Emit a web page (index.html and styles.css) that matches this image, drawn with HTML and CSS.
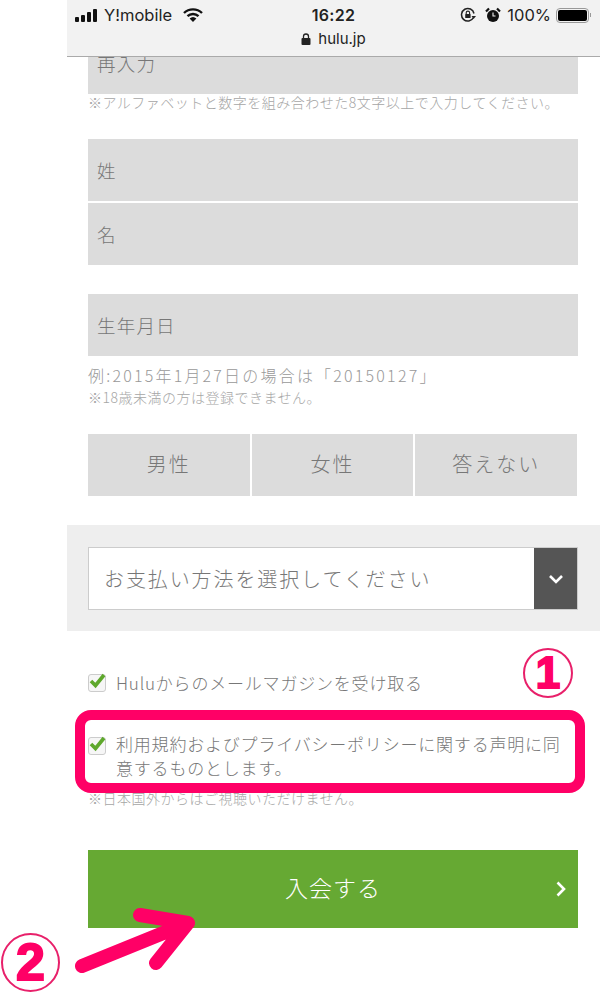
FILE: index.html
```html
<!DOCTYPE html>
<html lang="ja">
<head>
    <meta charset="UTF-8">
    <meta name="viewport" content="width=device-width, initial-scale=1.0">
    <link rel="stylesheet" href="styles.css">
    <title>Hulu</title>
</head>
<body>
    <div class="screen">
        <div class="browser-bar">
            <div class="status-row">
                <div class="status-left">
                    <svg class="signal" width="24" height="13" viewBox="0 0 24 13">
                        <rect x="0" y="8" width="4" height="5" rx="1"/>
                        <rect x="6" y="6" width="4" height="7" rx="1"/>
                        <rect x="12" y="3" width="4" height="10" rx="1"/>
                        <rect x="18" y="0" width="4" height="13" rx="1"/>
                    </svg>
                    <span>Y!mobile</span>
                    <svg class="wifi" width="20" height="14" viewBox="0 0 20 14">
                        <path d="M1 5 A13 13 0 0 1 19 5" fill="none" stroke="#111" stroke-width="2.4"/>
                        <path d="M4.5 8.2 A8 8 0 0 1 15.5 8.2" fill="none" stroke="#111" stroke-width="2.4"/>
                        <path d="M10 14 L6.6 10.6 A5 5 0 0 1 13.4 10.6 Z" fill="#111"/>
                    </svg>
                </div>
                <div class="status-time">16:22</div>
                <div class="status-right">
                    <svg class="rotate-lock" width="16" height="16" viewBox="0 0 16 16">
                        <path d="M13.5 10.5 A6.3 6.3 0 1 1 14 6.5" fill="none" stroke="#222" stroke-width="1.5"/>
                        <path d="M16 9 L11.5 9 L13.7 12 Z" fill="#222"/>
                        <rect x="5.2" y="7" width="5.4" height="4" rx="0.6" fill="#222"/>
                        <path d="M6.2 7 V5.8 A1.7 1.7 0 0 1 9.6 5.8 V7" fill="none" stroke="#222" stroke-width="1.1"/>
                    </svg>
                    <svg class="alarm" width="16" height="16" viewBox="0 0 16 16">
                        <circle cx="8" cy="9" r="6" fill="#111"/>
                        <path d="M1 4.5 L4 1.5 M15 4.5 L12 1.5" stroke="#111" stroke-width="2.2"/>
                        <path d="M8 5.5 V9 H10.5" fill="none" stroke="#f2f2f2" stroke-width="1.1"/>
                    </svg>
                    <span>100%</span>
                    <div class="battery"><div class="battery-fill"></div></div>
                    <div class="battery-tip"></div>
                </div>
            </div>
            <div class="url-row">
                <svg width="10" height="12" viewBox="0 0 10 12">
                    <rect x="0.5" y="5" width="9" height="7" rx="1" fill="#222"/>
                    <path d="M2.5 5 V3.5 A2.5 2.5 0 0 1 7.5 3.5 V5" fill="none" stroke="#222" stroke-width="1.3"/>
                </svg>
                <span>hulu.jp</span>
            </div>
        </div>

        <div class="form-top">
            <div class="field">再入力</div>
            <p class="note note-pass">※アルファベットと数字を組み合わせた8文字以上で入力してください。</p>

            <div class="field-group">
                <div class="field">姓</div>
                <div class="field">名</div>
            </div>

            <div class="field field-birth">生年月日</div>
            <p class="birth-example">例:2015年1月27日の場合は「20150127」</p>
            <p class="note note-age">※18歳未満の方は登録できません。</p>

            <div class="gender">
                <div class="gender-item">男性</div>
                <div class="gender-item">女性</div>
                <div class="gender-item">答えない</div>
            </div>
        </div>

        <div class="payment">
            <div class="select">
                <div class="select-label">お支払い方法を選択してください</div>
                <div class="select-arrow">
                    <svg width="16" height="10" viewBox="0 0 16 10">
                        <path d="M2 2 L8 8 L14 2" fill="none" stroke="#fff" stroke-width="2.6"/>
                    </svg>
                </div>
            </div>
        </div>

        <div class="form-bottom">
            <div class="check-row check-mail">
                <div class="checkbox">
                    <svg width="20" height="18" viewBox="0 0 20 18">
                        <path d="M3 9 L7.5 13.5 L16 3" fill="none" stroke="#5ea82c" stroke-width="3.6"/>
                    </svg>
                </div>
                <span>Huluからのメールマガジンを受け取る</span>
            </div>
            <div class="check-row check-terms">
                <div class="checkbox">
                    <svg width="20" height="18" viewBox="0 0 20 18">
                        <path d="M3 9 L7.5 13.5 L16 3" fill="none" stroke="#5ea82c" stroke-width="3.6"/>
                    </svg>
                </div>
                <span>利用規約およびプライバシーポリシーに関する声明に同<br>意するものとします。</span>
            </div>
            <p class="note note-abroad">※日本国外からはご視聴いただけません。</p>
            <div class="submit">
                入会する
                <svg class="submit-arrow" width="12" height="18" viewBox="0 0 12 18">
                    <path d="M2.5 2.5 L9 9 L2.5 15.5" fill="none" stroke="#fff" stroke-width="2.6"/>
                </svg>
            </div>
        </div>

        <!-- annotations drawn over the screenshot -->
        <div class="mark-box"></div>
        <div class="mark-num mark-one">1</div>
        <div class="mark-num mark-two">2</div>
        <svg class="mark-arrow" width="130" height="70" viewBox="0 0 130 70">
            <path d="M10 59 L116 16 M68 8 L116 16 L84 56" fill="none" stroke="#ff0066" stroke-width="14" stroke-linecap="round" stroke-linejoin="round"/>
        </svg>
    </div>
</body>
</html>
```

FILE: styles.css
```css
html, body {
    margin: 0;
    padding: 0;
    background-color: #ffffff;
}

body {
    font-family: "Noto Sans CJK JP", sans-serif;
    font-weight: 300;
    color: #777777;
}

p {
    margin: 0;
}

.screen {
    position: relative;
    width: 600px;
    height: 992px;
    overflow: hidden;
    padding-left: 67px;
    box-sizing: border-box;
}

.browser-bar {
    position: absolute;
    top: 0;
    left: 67px;
    right: 0;
    height: 56px;
    background-color: #f2f2f2;
    border-bottom: 1px solid #aaaaaa;
    font-family: Inter, sans-serif;
    font-weight: 400;
    color: #222222;
    z-index: 2;
}

.status-row {
    position: relative;
    display: flex;
    align-items: center;
    justify-content: space-between;
    height: 30px;
    padding: 0 9px 0 8px;
    font-size: 16.5px;
}

.status-left, .status-right {
    display: flex;
    align-items: center;
}

.status-left span {
    margin-left: 5px;
}

.signal {
    fill: #111111;
}

.wifi {
    margin-left: 11px;
}

.status-time {
    position: absolute;
    left: 0;
    right: 0;
    text-align: center;
    font-size: 16px;
    font-weight: 600;
    letter-spacing: 0.3px;
}

.alarm {
    margin-left: 9px;
}

.status-right span {
    margin-left: 6px;
}

.battery {
    width: 29px;
    height: 11px;
    margin-left: 5px;
    padding: 1px;
    border: 1px solid #999999;
    border-radius: 4px;
}

.battery-fill {
    height: 100%;
    background-color: #000000;
    border-radius: 2px;
}

.battery-tip {
    width: 1px;
    height: 4px;
    margin-left: 1px;
    background-color: #999999;
}

.url-row {
    display: flex;
    align-items: center;
    justify-content: center;
    gap: 7px;
    margin-top: -1px;
    font-size: 15px;
}

.form-top {
    padding: 32px 22px 29px 21px;
}

.field {
    height: 62px;
    padding-left: 9px;
    background-color: #dcdcdc;
    font-size: 18.5px;
    line-height: 62px;
    letter-spacing: 1.2px;
    color: #777777;
}

.note {
    font-size: 14px;
    line-height: 18px;
    letter-spacing: 0.5px;
    color: #a6a6a6;
}

.note-pass {
    line-height: 16px;
}

.field-group {
    display: flex;
    flex-direction: column;
    gap: 2px;
    margin-top: 29px;
}

.field-birth {
    margin-top: 29px;
}

.birth-example {
    margin-top: 9px;
    font-size: 16px;
    line-height: 20px;
    letter-spacing: 2.2px;
    color: #999999;
}

.note-age {
    margin-top: 3px;
}

.gender {
    display: flex;
    gap: 2px;
    margin-top: 28px;
    width: 489px;
}

.gender-item {
    flex: 1;
    height: 62px;
    background-color: #dcdcdc;
    font-size: 20px;
    line-height: 60px;
    letter-spacing: 2px;
    text-align: center;
}

.payment {
    padding: 22px 22px 21px 21px;
    background-color: #eeeeee;
}

.select {
    display: flex;
    height: 63px;
    box-sizing: border-box;
    background-color: #ffffff;
    border: 1px solid #cccccc;
}

.select-label {
    flex: 1;
    padding-left: 15px;
    font-size: 20px;
    line-height: 61px;
    letter-spacing: 1.9px;
}

.select-arrow {
    display: flex;
    align-items: center;
    justify-content: center;
    width: 43px;
    background-color: #555555;
}

.form-bottom {
    padding: 0 22px 0 21px;
}

.check-row {
    display: flex;
    font-size: 17px;
    line-height: 24px;
    letter-spacing: 0.8px;
    color: #777777;
}

.check-mail {
    margin-top: 40px;
    align-items: center;
}

.check-terms {
    margin-top: 37px;
    height: 49px;
}

.checkbox {
    position: relative;
    flex: none;
    width: 16px;
    height: 16px;
    margin-right: 10px;
    border: 1px solid #cccccc;
    border-radius: 3px;
    background-color: #f6f6f6;
}

.check-terms .checkbox {
    margin-top: 5px;
}

.checkbox svg {
    position: absolute;
    top: -3px;
    left: -1px;
}

.note-abroad {
    margin-top: 8px;
}

.submit {
    position: relative;
    height: 78px;
    margin-top: 43px;
    background-color: #66a933;
    color: #ffffff;
    font-size: 23px;
    line-height: 75px;
    letter-spacing: 1px;
    text-align: center;
}

.submit-arrow {
    position: absolute;
    top: 30px;
    right: 11px;
}

.mark-box {
    position: absolute;
    left: 75px;
    top: 710px;
    width: 510px;
    height: 83px;
    box-sizing: border-box;
    border: 10px solid #ff0066;
    border-radius: 16px;
}

.mark-num {
    position: absolute;
    box-sizing: border-box;
    border: 2px solid #e8206a;
    border-radius: 50%;
    font-family: "Liberation Sans", sans-serif;
    font-weight: 700;
    text-align: center;
    color: #ff0066;
    -webkit-text-stroke: 2px #ff0066;
}

.mark-one {
    left: 523px;
    top: 648px;
    width: 50px;
    height: 50px;
    font-size: 44px;
    line-height: 46px;
}

.mark-two {
    left: 1px;
    top: 933px;
    width: 59px;
    height: 59px;
    font-size: 52px;
    line-height: 55px;
}

.mark-arrow {
    position: absolute;
    left: 72px;
    top: 907px;
}
```
